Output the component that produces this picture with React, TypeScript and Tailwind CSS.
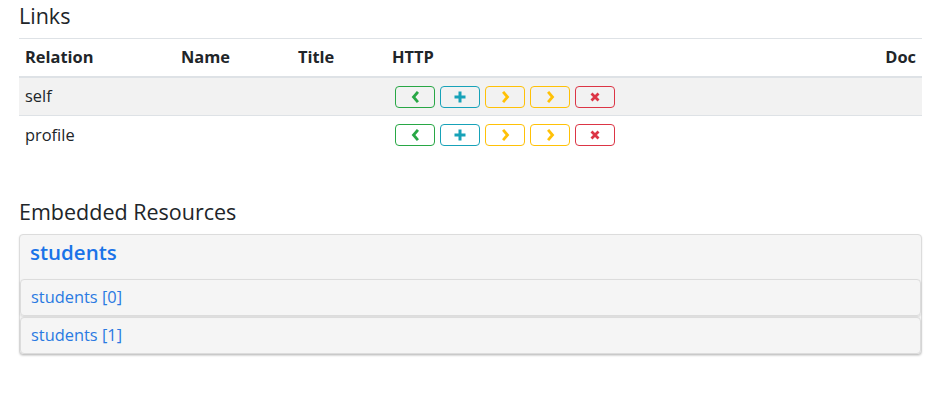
const FONT = { fontFamily: '"Open Sans", "Noto Sans", Arial, sans-serif' };

const links = [
  { rel: 'self', shaded: true },
  { rel: 'profile', shaded: false },
];

const cols = 'grid grid-cols-[156px_117px_94px_1fr_auto]';

function Chevron({ dir }: { dir: 'left' | 'right' }) {
  return (
    <svg width="11" height="12" viewBox="0 0 11 12" fill="none" stroke="currentColor" strokeWidth="2.8" strokeLinecap="square">
      {dir === 'left' ? <path d="M7 2 3.5 6 7 10" /> : <path d="M4 2l3.5 4L4 10" />}
    </svg>
  );
}

function HttpButtons() {
  const btn = 'w-[40px] h-[22px] flex items-center justify-center border rounded-[4px]';
  return (
    <div className="flex items-center gap-[5px] ml-[3px]">
      <button className={`${btn} border-[#28a745] text-[#28a745]`}>
        <Chevron dir="left" />
      </button>
      <button className={`${btn} border-[#17a2b8] text-[#17a2b8]`}>
        <svg width="12" height="12" viewBox="0 0 12 12" stroke="currentColor" strokeWidth="3">
          <path d="M6 0.5v11M0.5 6h11" />
        </svg>
      </button>
      <button className={`${btn} border-[#ffc107] text-[#ffc107]`}>
        <Chevron dir="right" />
      </button>
      <button className={`${btn} border-[#ffc107] text-[#ffc107]`}>
        <Chevron dir="right" />
      </button>
      <button className={`${btn} border-[#dc3545] text-[#dc3545]`}>
        <svg width="10" height="10" viewBox="0 0 10 10" stroke="currentColor" strokeWidth="2.8">
          <path d="M1.5 1.5l7 7M8.5 1.5l-7 7" />
        </svg>
      </button>
    </div>
  );
}

export default function App() {
  return (
    <div className="bg-white w-[945px] h-[415px] pl-[19px] pr-[23px] pt-[4px] text-[#212529]" style={FONT}>
      <h5 className="text-[21.5px] leading-[24px] font-medium mb-[10px]">Links</h5>

      <div className="text-[16.4px]">
        <div className={`${cols} h-[40px] items-center border-t border-[#dee2e6] border-b-2 font-bold`}>
          <div className="px-[6px]">Relation</div>
          <div className="px-[6px]">Name</div>
          <div className="px-[6px]">Title</div>
          <div className="px-[6px]">HTTP</div>
          <div className="px-[6px] text-right">Doc</div>
        </div>
        {links.map((l, i) => (
          <div
            key={l.rel}
            className={`${cols} h-[38px] items-center ${i === 0 ? 'border-b border-[#dee2e6]' : ''} ${l.shaded ? 'bg-[#f2f2f2]' : ''}`}
          >
            <div className="px-[6px]">{l.rel}</div>
            <div className="px-[6px]"></div>
            <div className="px-[6px]"></div>
            <div className="px-[6px]">
              <HttpButtons />
            </div>
            <div className="px-[6px]"></div>
          </div>
        ))}
      </div>

      <h5 className="text-[21.5px] leading-[24px] font-medium mt-[46px] mb-[10px]">Embedded Resources</h5>

      <div className="border border-[#dcdcdc] rounded-[4px] bg-[#f5f5f5] shadow-[0_1px_2px_rgba(0,0,0,0.12)]">
        <div className="h-[44px] px-[10px] pb-[9px] flex items-center">
          <a className="text-[20.5px] font-semibold text-[#1a73e8]">students</a>
        </div>
        <div className="border border-[#dcdcdc] rounded-[4px] shadow-[0_1px_2px_rgba(0,0,0,0.12)] h-[37px] px-[10px] flex items-center mb-[1px]">
          <a className="text-[16.4px] text-[#2a7ae2]">students [0]</a>
        </div>
        <div className="border border-[#dcdcdc] rounded-[4px] shadow-[0_1px_2px_rgba(0,0,0,0.12)] h-[37px] px-[10px] flex items-center">
          <a className="text-[16.4px] text-[#2a7ae2]">students [1]</a>
        </div>
      </div>
    </div>
  );
}
